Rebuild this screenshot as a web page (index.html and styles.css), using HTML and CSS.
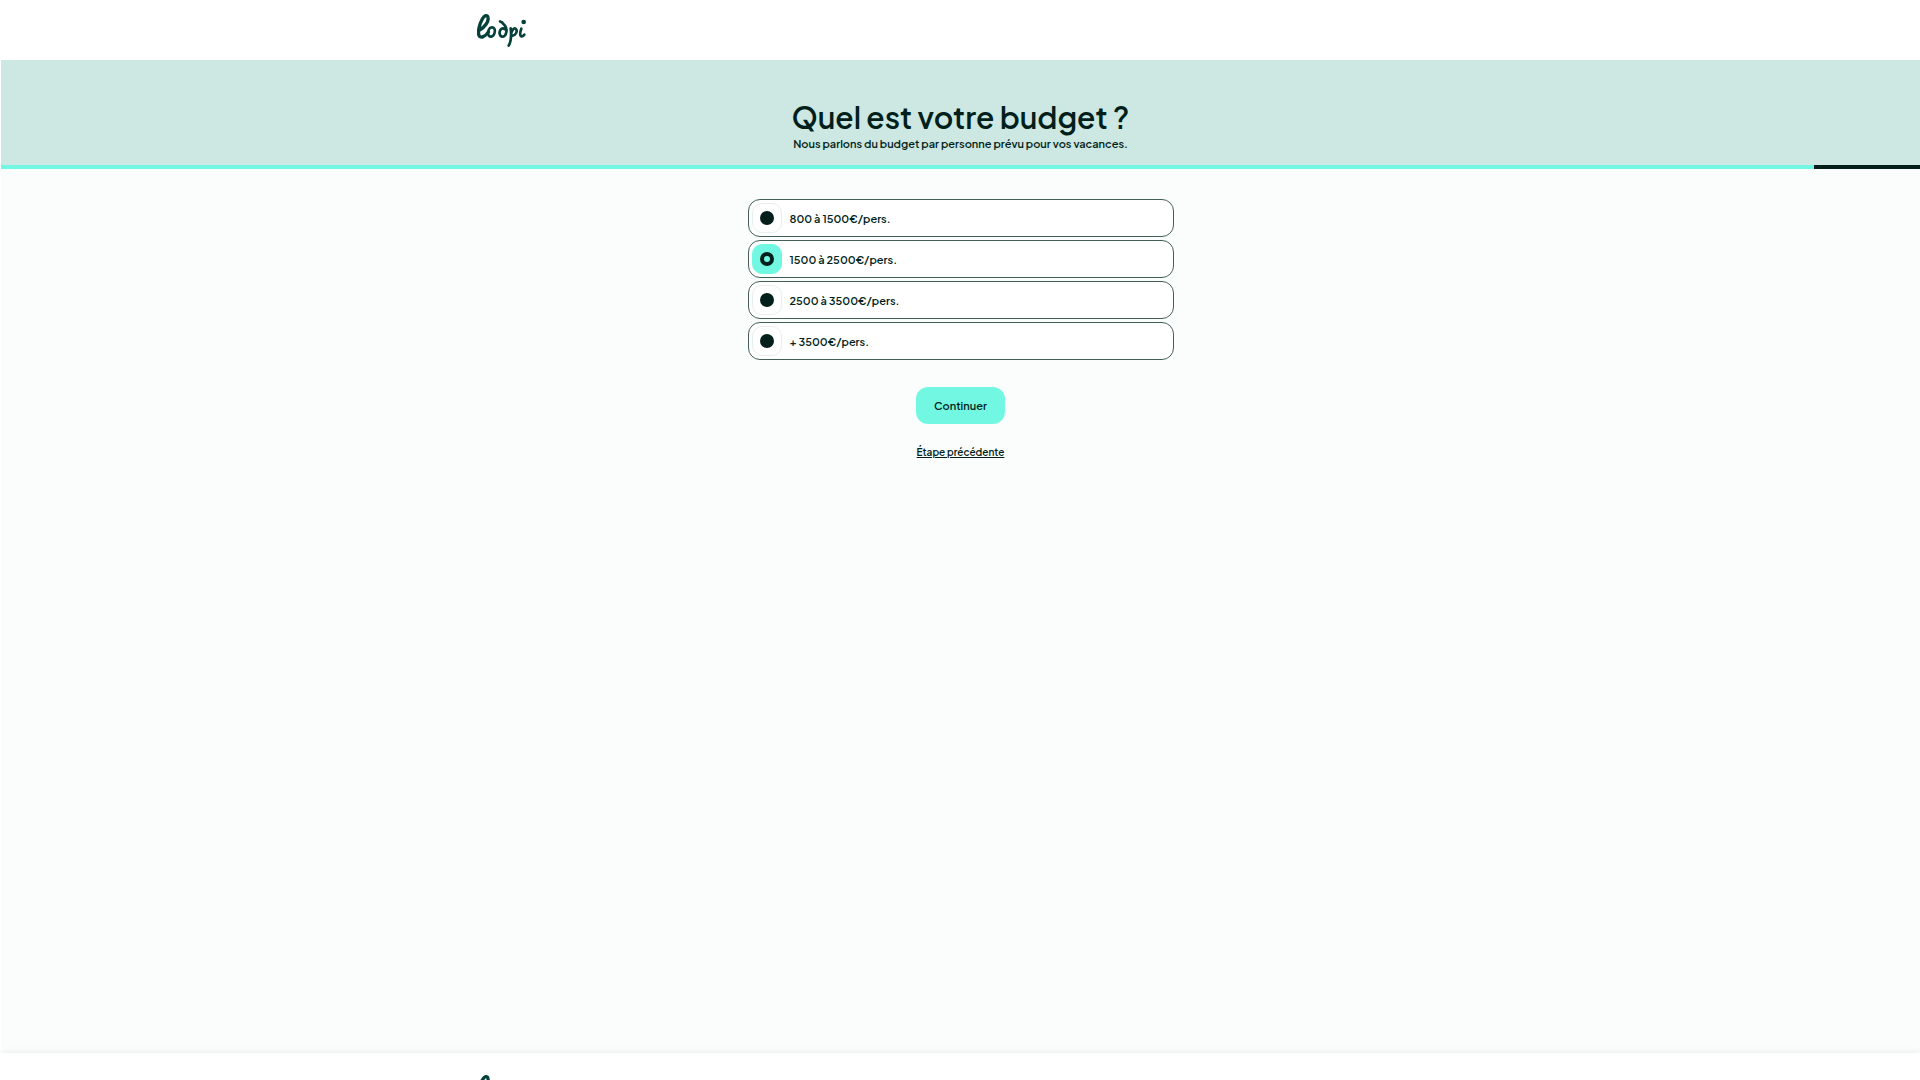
FILE: index.html
```html
<!DOCTYPE html>
<html lang="fr">
<head>
  <meta charset="UTF-8" />
  <meta name="viewport" content="width=device-width, initial-scale=1.0"/>
  <title>Loopi - Votre budget</title>
  <link rel="stylesheet" href="styles.css">
</head>
<body>
  <header class="site-header">
    <div class="container">
      <a href="#" class="logo" aria-label="Loopi">
        <svg viewBox="0 0 150 105" width="50" height="35">
          <g id="loopi-logo" fill="none" stroke="#05403a" stroke-width="8" stroke-linecap="round" stroke-linejoin="round">
            <path stroke-width="10" d="M8 51C24 42 36 25 33 13C31 4 22 7 16 18C7 34 2 56 6 67C10 78 26 70 34 57"/>
            <path d="M46 43C36 42 32 54 34 64C37 74 48 73 52 62C56 52 53 44 46 43"/>
            <path d="M69 25C73 29 76 26 77 31C84 37 90 47 88 57C87 67 80 72 75 71C67 69 66 58 70 51C74 45 80 45 84 49"/>
            <path d="M101 46C103 62 104 83 95 98M102 65C103 52 111 43 116 47C123 53 116 71 103 67"/>
            <path d="M133 47C129 57 128 69 133 70C137 70 140 68 142 65"/>
            <circle cx="140" cy="27" r="3" fill="#05403a"/>
          </g>
        </svg>
      </a>
    </div>
  </header>

  <main>
    <div class="banner">
      <h1>Quel est votre budget ?</h1>
      <p>Nous parlons du budget par personne prévu pour vos vacances.</p>
    </div>
    <div class="progress"><div class="progress-bar" style="width: 94.5%"></div></div>

    <form class="budget-form">
      <label class="option">
        <input type="radio" name="budget" value="800-1500">
        <span>800 à 1500€/pers.</span>
      </label>
      <label class="option">
        <input type="radio" name="budget" value="1500-2500" checked>
        <span>1500 à 2500€/pers.</span>
      </label>
      <label class="option">
        <input type="radio" name="budget" value="2500-3500">
        <span>2500 à 3500€/pers.</span>
      </label>
      <label class="option">
        <input type="radio" name="budget" value="3500+">
        <span>+ 3500€/pers.</span>
      </label>
      <button type="button" class="btn">Continuer</button>
      <a href="#" class="back">Étape précédente</a>
    </form>
  </main>

  <footer class="site-footer">
    <div class="container">
      <a href="#" class="logo" aria-label="Loopi">
        <svg viewBox="0 0 150 105" width="50" height="35"><use href="#loopi-logo"/></svg>
      </a>
    </div>
  </footer>
</body>
</html>
```

FILE: styles.css
```css
*,
*::before {
  box-sizing: border-box;
}

body {
  margin: 0;
  display: flex;
  flex-direction: column;
  height: 100vh;
  overflow: hidden;
  font-family: "Plus Jakarta Sans", Inter, sans-serif;
  font-size: 11px;
  font-weight: 600;
  line-height: 16px;
  color: #021f1b;
  background-color: #fff;
}

.container {
  max-width: 966px;
  margin: 0 auto;
}

.logo svg {
  display: block;
}

.site-header {
  padding: 13px 0 12px;
}

main {
  flex: 1;
  border-left: 1px solid #fff;
  background-color: #fbfdfc;
}

.banner {
  padding: 39px 16px 13px;
  text-align: center;
  background-color: #cde8e2;
}

.banner h1 {
  margin: 0;
  font-size: 30px;
  font-weight: 600;
  line-height: 37px;
}

.banner p {
  margin: 0;
}

.progress {
  height: 4px;
  background-color: #021f1b;
}

.progress-bar {
  height: 100%;
  background-color: #72f8e2;
}

.budget-form {
  display: flex;
  flex-direction: column;
  gap: 3px;
  max-width: 426px;
  margin: 30px auto 0;
}

.option {
  display: flex;
  align-items: center;
  gap: 8px;
  height: 38px;
  padding: 0 3px;
  border: 1px solid #435f59;
  border-radius: 12px;
  background-color: #fff;
  cursor: pointer;
}

.option span {
  padding-top: 2px;
}

.option input {
  appearance: none;
  display: grid;
  place-items: center;
  width: 30px;
  height: 30px;
  margin: 0;
  border: 1px solid #e9efed;
  border-radius: 10px;
}

.option input::before {
  content: "";
  width: 14px;
  height: 14px;
  border: 4px solid #021f1b;
  border-radius: 50%;
  background-color: #021f1b;
}

.option input:checked {
  border-color: #72f8e2;
  background-color: #72f8e2;
}

.option input:checked::before {
  background-color: #72f8e2;
}

.btn {
  align-self: center;
  height: 37px;
  margin-top: 24px;
  padding: 0 18px;
  border: 0;
  border-radius: 12px;
  font: inherit;
  color: inherit;
  background-color: #72f8e2;
}

.back {
  align-self: center;
  margin-top: 17px;
  font-size: 10px;
  color: inherit;
}

.site-footer {
  height: 27px;
  padding-top: 21px;
  box-shadow: 0 0 8px rgba(2, 31, 27, 0.08);
}
```
